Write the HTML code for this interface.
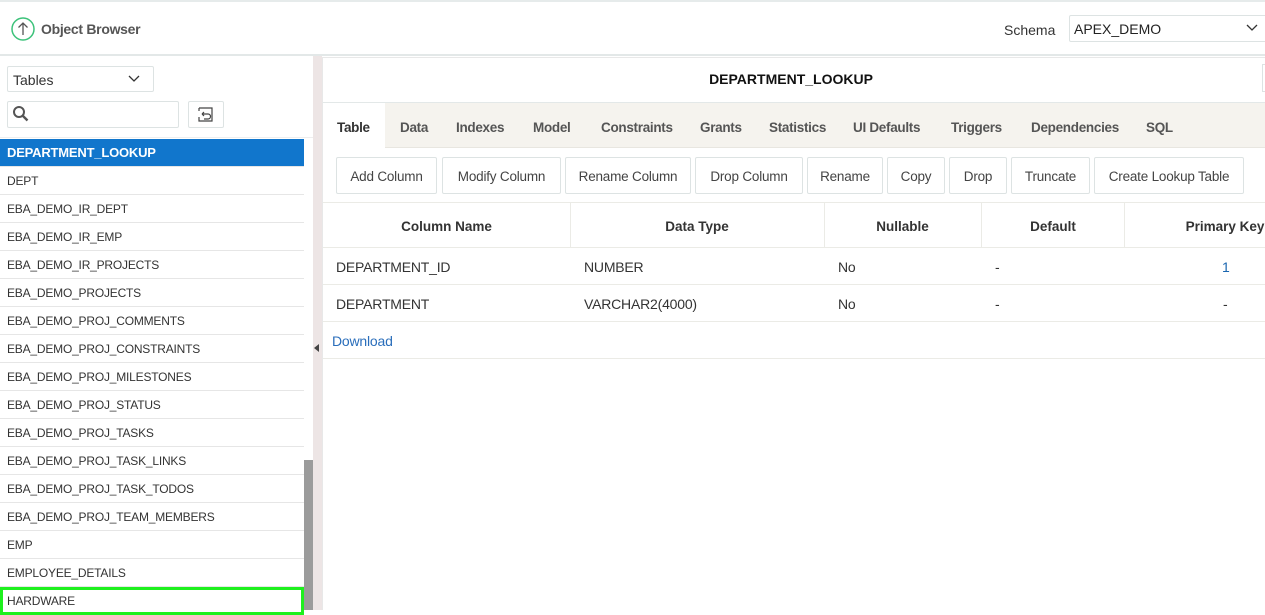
<!DOCTYPE html>
<html><head><style>
*{box-sizing:border-box;margin:0;padding:0}
body{width:1265px;height:610px;overflow:hidden;background:#fff;font-family:"Liberation Sans",sans-serif;color:#333;position:relative}
.hdr{position:absolute;left:0;top:0;width:1265px;height:56px;border-top:2px solid #e6ebeb;border-bottom:2px solid #e3e8e8;background:#fff}
.abs{position:absolute}
.list{position:absolute;left:0;top:139px;width:304px}
.list div{height:28px;line-height:28px;padding-left:7px;font-size:12px;color:#333;border-bottom:1px solid #e6e6e6;letter-spacing:-0.2px}
.list div.sel{background:#1176cc;color:#fff;font-weight:bold;font-size:13px}
.tabs{position:absolute;left:323px;top:103px;width:942px;height:45px;background:#f5f3ee;border-bottom:1px solid #e8e6e0}
.tabs span{position:absolute;top:1px;line-height:47px;font-size:13.5px;font-weight:bold;color:#555;letter-spacing:-0.3px}
.btn{position:absolute;top:157px;height:37px;border:1px solid #dde3e3;border-radius:2px;font-size:13.5px;line-height:37px;text-align:center;color:#444;background:#fff;letter-spacing:-0.2px}
.th{position:absolute;top:204px;height:45px;line-height:45px;font-size:13.5px;font-weight:bold;color:#333;text-align:center}
.td{position:absolute;font-size:14px;color:#333;letter-spacing:-0.2px}
.hl{position:absolute;left:323px;width:942px;height:1px;background:#ebebe6}
.vl{position:absolute;top:203px;width:1px;height:45px;background:#ebebe6}
</style></head><body>
<div class="hdr"></div>
<svg class="abs" style="left:11px;top:17px" width="24" height="24" viewBox="0 0 24 24"><circle cx="12" cy="12" r="11" fill="none" stroke="#3cc27a" stroke-width="1.5"/><path d="M12 18V6M7.5 10.5L12 6l4.5 4.5" fill="none" stroke="#555" stroke-width="1.3"/></svg>
<div class="abs" style="left:41px;top:21px;font-size:14px;font-weight:bold;color:#555;letter-spacing:-0.3px">Object Browser</div>
<div class="abs" style="left:1004px;top:22px;font-size:14px;color:#333">Schema</div>
<div class="abs" style="left:1069px;top:15px;width:200px;height:27px;border:1px solid #dde3e3;border-radius:2px;font-size:14px;line-height:26px;padding-left:4px;color:#222">APEX_DEMO</div>
<svg class="abs" style="left:1246px;top:24px" width="12" height="8"><path d="M1 1l5 5 5-5" fill="none" stroke="#333" stroke-width="1.3"/></svg>

<div class="abs" style="left:7px;top:66px;width:147px;height:26px;border:1px solid #dde3e3;border-radius:2px;font-size:14px;line-height:26px;padding-left:5px">Tables</div>
<svg class="abs" style="left:128px;top:75px" width="12" height="8"><path d="M1 1l5 5 5-5" fill="none" stroke="#333" stroke-width="1.3"/></svg>
<div class="abs" style="left:7px;top:101px;width:172px;height:27px;border:1px solid #dde3e3;border-radius:2px"></div>
<svg class="abs" style="left:12px;top:105px" width="18" height="18"><circle cx="7" cy="7" r="5" fill="none" stroke="#555" stroke-width="2"/><path d="M10.5 10.5l5 5" stroke="#555" stroke-width="2.4"/></svg>
<div class="abs" style="left:188px;top:101px;width:36px;height:27px;border:1px solid #dde3e3;border-radius:2px"></div>
<svg class="abs" style="left:198px;top:107px" width="16" height="16"><path d="M1 1h13v13H1V10M1 1v3" fill="none" stroke="#444" stroke-width="1.2"/><path d="M4 7h6a2.5 2.5 0 010 5H6M4 7l2-2M4 7l2 2" fill="none" stroke="#444" stroke-width="1.2"/></svg>
<div class="abs" style="left:0;top:137px;width:313px;height:1px;background:#eee"></div>
<div class="list">
<div class="sel">DEPARTMENT_LOOKUP</div><div>DEPT</div><div>EBA_DEMO_IR_DEPT</div><div>EBA_DEMO_IR_EMP</div><div>EBA_DEMO_IR_PROJECTS</div><div>EBA_DEMO_PROJECTS</div><div>EBA_DEMO_PROJ_COMMENTS</div><div>EBA_DEMO_PROJ_CONSTRAINTS</div><div>EBA_DEMO_PROJ_MILESTONES</div><div>EBA_DEMO_PROJ_STATUS</div><div>EBA_DEMO_PROJ_TASKS</div><div>EBA_DEMO_PROJ_TASK_LINKS</div><div>EBA_DEMO_PROJ_TASK_TODOS</div><div>EBA_DEMO_PROJ_TEAM_MEMBERS</div><div>EMP</div><div>EMPLOYEE_DETAILS</div><div style="border:3px solid #1ef01e;line-height:22px;padding-left:4px">HARDWARE</div>
</div>
<div class="abs" style="left:304px;top:460px;width:9px;height:150px;background:#9b9b9b"></div>
<div class="abs" style="left:313px;top:56px;width:9px;height:554px;background:#ede5e5"></div>
<svg class="abs" style="left:314px;top:344px" width="6" height="8"><path d="M5 0v8L0 4z" fill="#444"/></svg>

<div class="abs" style="left:322px;top:57px;width:943px;height:553px;border-left:1px solid #e8e8e8;border-top:1px solid #e8e8e8"></div>
<div class="abs" style="left:323px;top:71px;width:936px;text-align:center;font-size:14px;font-weight:bold;color:#111">DEPARTMENT_LOOKUP</div>
<div class="abs" style="left:1262px;top:64px;width:5px;height:28px;border:1px solid #dde3e3"></div>
<div class="hl" style="top:102px;background:#e3e8e8"></div>
<div class="tabs">
<div class="abs" style="left:0;top:0;width:62px;height:46px;background:#fff"></div>
<span style="left:14px;color:#333">Table</span><span style="left:77px">Data</span><span style="left:133px">Indexes</span><span style="left:210px">Model</span><span style="left:278px">Constraints</span><span style="left:377px">Grants</span><span style="left:446px">Statistics</span><span style="left:530px">UI Defaults</span><span style="left:628px">Triggers</span><span style="left:708px">Dependencies</span><span style="left:823px">SQL</span>
</div>
<div class="btn" style="left:336px;width:101px">Add Column</div>
<div class="btn" style="left:442px;width:119px">Modify Column</div>
<div class="btn" style="left:565px;width:126px">Rename Column</div>
<div class="btn" style="left:695px;width:108px">Drop Column</div>
<div class="btn" style="left:807px;width:76px">Rename</div>
<div class="btn" style="left:887px;width:58px">Copy</div>
<div class="btn" style="left:949px;width:58px">Drop</div>
<div class="btn" style="left:1011px;width:79px">Truncate</div>
<div class="btn" style="left:1094px;width:150px">Create Lookup Table</div>
<div class="hl" style="top:202px"></div>
<div class="th" style="left:323px;width:247px">Column Name</div>
<div class="th" style="left:570px;width:254px">Data Type</div>
<div class="th" style="left:824px;width:157px">Nullable</div>
<div class="th" style="left:981px;width:144px">Default</div>
<div class="th" style="left:1125px;width:200px">Primary Key</div>
<div class="vl" style="left:570px"></div><div class="vl" style="left:824px"></div><div class="vl" style="left:981px"></div><div class="vl" style="left:1124px"></div>
<div class="hl" style="top:247px"></div>
<div class="td" style="left:336px;top:259px">DEPARTMENT_ID</div><div class="td" style="left:584px;top:259px">NUMBER</div><div class="td" style="left:838px;top:259px">No</div><div class="td" style="left:995px;top:259px">-</div><div class="td" style="left:1222px;top:259px;color:#1a66b0">1</div>
<div class="hl" style="top:284px"></div>
<div class="td" style="left:336px;top:296px">DEPARTMENT</div><div class="td" style="left:584px;top:296px">VARCHAR2(4000)</div><div class="td" style="left:838px;top:296px">No</div><div class="td" style="left:995px;top:296px">-</div><div class="td" style="left:1223px;top:296px">-</div>
<div class="hl" style="top:321px"></div>
<div class="td" style="left:332px;top:333px;color:#2a6ebb">Download</div>
<div class="hl" style="top:358px"></div>
</body></html>
